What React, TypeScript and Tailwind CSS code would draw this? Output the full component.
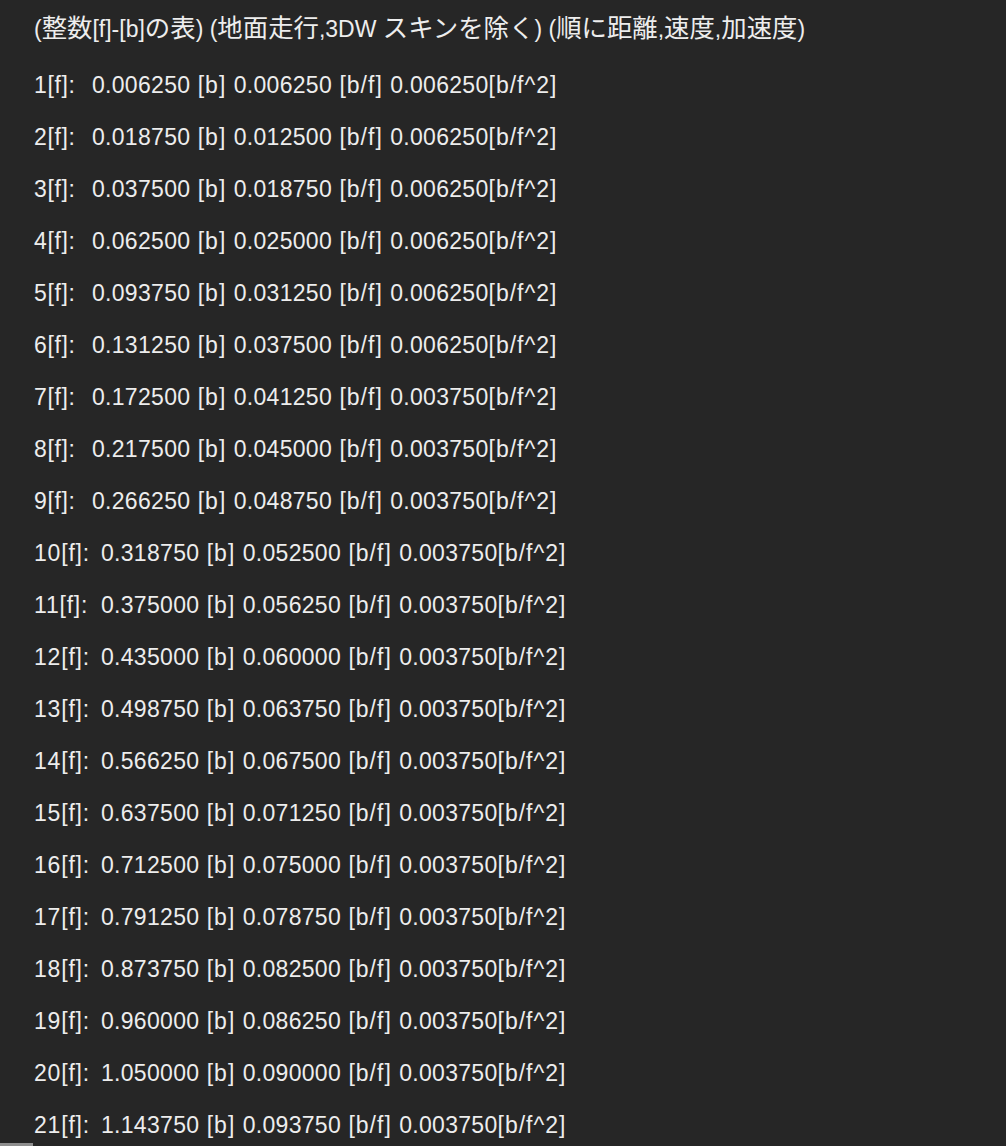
import React from "react";

const rows: [string, string, string, string][] = [
  ["1", "0.006250", "0.006250", "0.006250"],
  ["2", "0.018750", "0.012500", "0.006250"],
  ["3", "0.037500", "0.018750", "0.006250"],
  ["4", "0.062500", "0.025000", "0.006250"],
  ["5", "0.093750", "0.031250", "0.006250"],
  ["6", "0.131250", "0.037500", "0.006250"],
  ["7", "0.172500", "0.041250", "0.003750"],
  ["8", "0.217500", "0.045000", "0.003750"],
  ["9", "0.266250", "0.048750", "0.003750"],
  ["10", "0.318750", "0.052500", "0.003750"],
  ["11", "0.375000", "0.056250", "0.003750"],
  ["12", "0.435000", "0.060000", "0.003750"],
  ["13", "0.498750", "0.063750", "0.003750"],
  ["14", "0.566250", "0.067500", "0.003750"],
  ["15", "0.637500", "0.071250", "0.003750"],
  ["16", "0.712500", "0.075000", "0.003750"],
  ["17", "0.791250", "0.078750", "0.003750"],
  ["18", "0.873750", "0.082500", "0.003750"],
  ["19", "0.960000", "0.086250", "0.003750"],
  ["20", "1.050000", "0.090000", "0.003750"],
  ["21", "1.143750", "0.093750", "0.003750"],
];

function J({ children }: { children: React.ReactNode }) {
  return <span className="text-[25.4px]">{children}</span>;
}

export default function App() {
  return (
    <div className="relative h-[1146px] overflow-hidden bg-[#262626] text-[#ededed] font-['Liberation_Sans','Noto_Sans_CJK_JP',sans-serif] text-[23px]">
      <div className="pl-[34px] pt-[2px]">
        <div className="flex h-[52px] items-center whitespace-pre">
          <span>
            (<J>整数</J>[f]-[b]<J>の表</J>) (<J>地面走行</J>,3DW <J>スキンを除く</J>) (<J>順に距離</J>,<J>速度</J>,<J>加速度</J>)
          </span>
        </div>
        <div className="mt-[5px]">
          {rows.map(([f, d, v, a]) => (
            <div key={f} className="flex h-[52px] items-center whitespace-pre">
              <span
                className={
                  f.length === 1
                    ? "inline-block w-[58px] tracking-[0.6px]"
                    : "inline-block w-[67px] tracking-[0.8px]"
                }
              >
                {f}[f]:
              </span>
              <span className="tracking-[0.3px]">{d}</span>
              <span className="tracking-[1px]"> [b] </span>
              <span className="tracking-[0.3px]">{v}</span>
              <span className="tracking-[1px]"> [b/f] </span>
              <span className="tracking-[0.3px]">{a}</span>
              <span className="tracking-[1px]">[b/f^2]</span>
            </div>
          ))}
        </div>
      </div>
      <div className="absolute bottom-0 left-0 h-[3px] w-[33px] bg-[#8e8e8e]" />
    </div>
  );
}
